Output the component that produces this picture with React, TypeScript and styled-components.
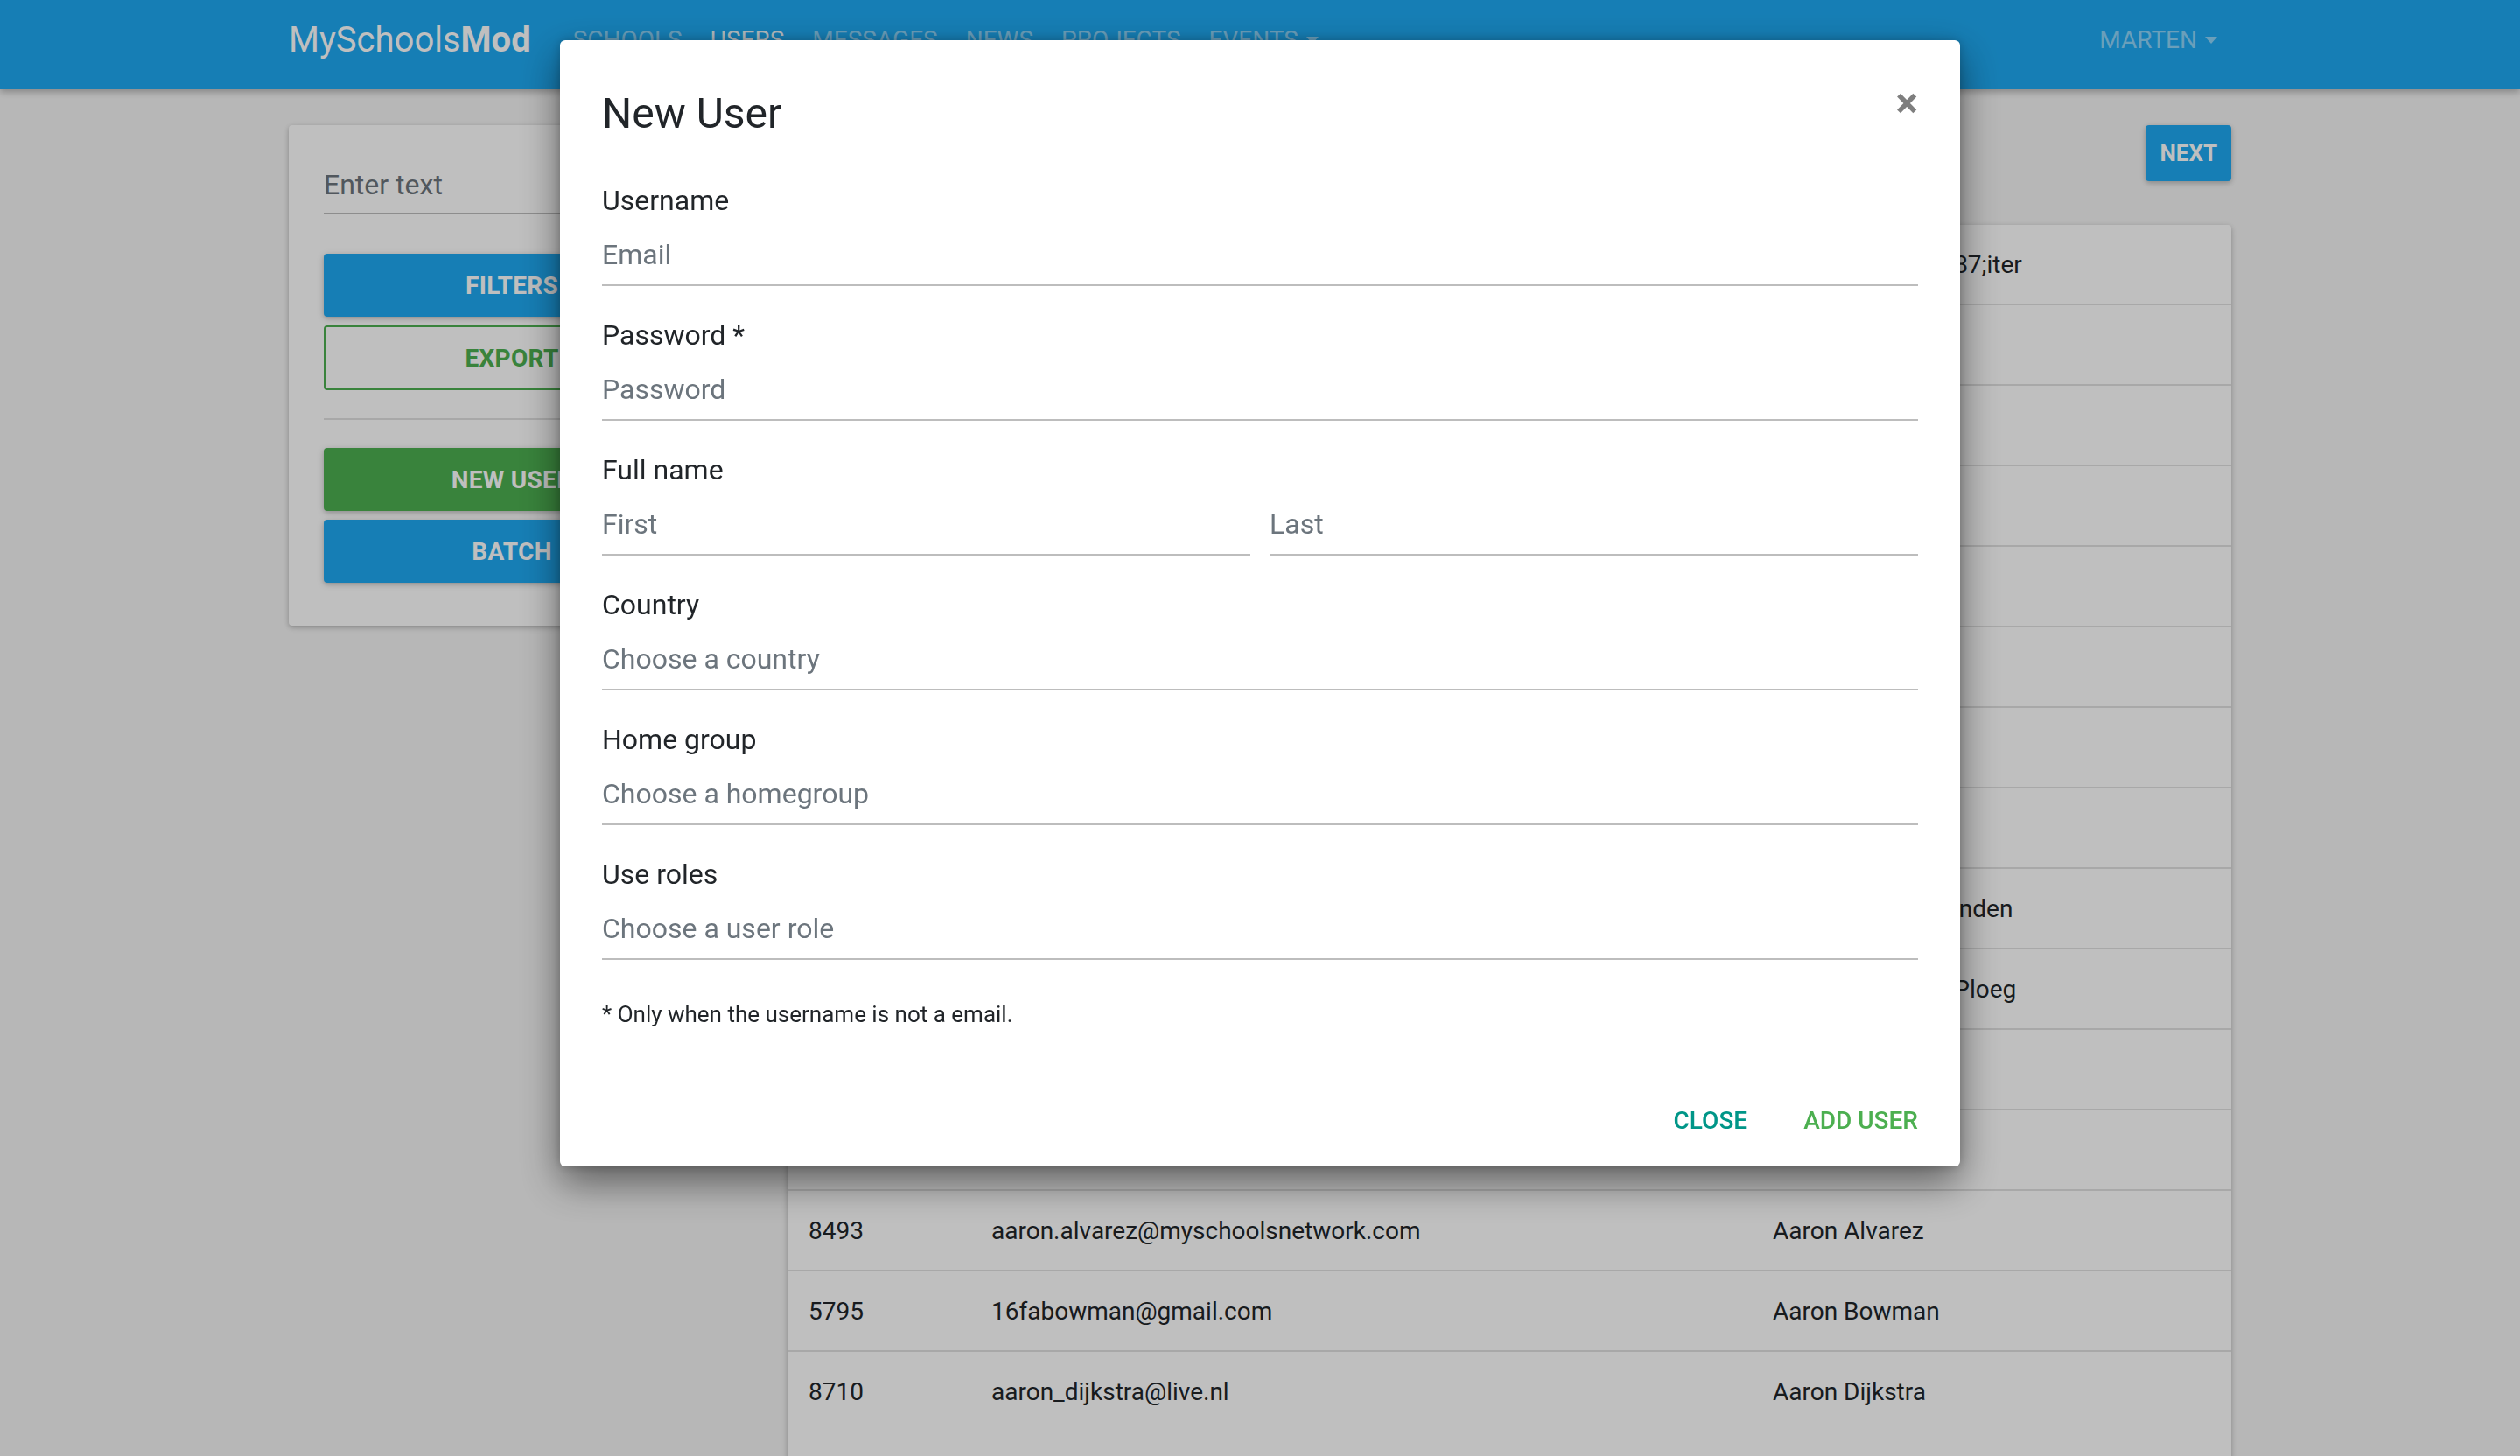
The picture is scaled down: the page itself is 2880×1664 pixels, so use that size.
import React from "react";
import styled, { createGlobalStyle } from "styled-components";

const GlobalStyle = createGlobalStyle`
  * { box-sizing: border-box; }
  html, body { margin: 0; padding: 0; height: 100%; overflow: hidden; }
  body {
    font-family: Roboto, "Noto Sans", "Liberation Sans", sans-serif;
    background: #f5f5f5;
    color: #212529;
  }
`;

const PRIMARY = "#1ea9f2";

const Page = styled.div`
  min-height: 100vh;
  background: #f5f5f5;
`;

const NavBar = styled.header`
  height: 102px;
  background: ${PRIMARY};
  box-shadow: 0 3px 8px rgba(0, 0, 0, 0.28);
  position: relative;
  z-index: 1;
`;

const NavInner = styled.nav`
  width: 2220px;
  margin: 0 auto;
  height: 91px;
  display: flex;
  align-items: center;
`;

const Brand = styled.a`
  font-size: 40px;
  color: #fff;
  margin-right: 32px;
  line-height: 1;
  text-decoration: none;
  b { font-weight: 700; }
`;

const NavLink = styled.a<{ $active?: boolean; $right?: boolean }>`
  font-size: 28px;
  text-transform: uppercase;
  padding: 0 16px;
  line-height: 42px;
  color: ${(p) => (p.$active ? "rgba(255,255,255,0.95)" : "rgba(255,255,255,0.5)")};
  margin-left: ${(p) => (p.$right ? "auto" : "0")};
  text-decoration: none;
  display: inline-flex;
  align-items: center;
`;

const Caret = styled.span`
  display: inline-block;
  margin-left: 9px;
  border-top: 8px solid currentColor;
  border-left: 7px solid transparent;
  border-right: 7px solid transparent;
`;

const Main = styled.main`
  width: 2220px;
  margin: 0 auto;
  padding-top: 41px;
  display: grid;
  grid-template-columns: 510px 1650px;
  gap: 60px;
  align-items: start;
`;

const Card = styled.section`
  background: #fff;
  border-radius: 4px;
  box-shadow: 0 2px 5px rgba(0, 0, 0, 0.16), 0 2px 10px rgba(0, 0, 0, 0.12);
`;

const SidePanel = styled(Card)`
  padding: 40px 40px 49px;
  display: flex;
  flex-direction: column;
`;

const SearchInput = styled.input`
  height: 62px;
  border: none;
  border-bottom: 2px solid #bdbdbd;
  padding: 0 0 4px;
  font-family: inherit;
  font-size: 32px;
  background: transparent;
  color: #212529;
  outline: none;
  margin-bottom: 45px;
  &::placeholder { color: #6c757d; }
`;

const variantBg: Record<string, string> = {
  blue: PRIMARY,
  green: "#4caf50",
  outline: "transparent",
};

const PanelButton = styled.button<{ $variant: "blue" | "green" | "outline" }>`
  height: ${(p) => (p.$variant === "outline" ? "74px" : "72px")};
  width: 100%;
  border-radius: 4px;
  font-family: inherit;
  font-size: 28px;
  font-weight: 700;
  text-transform: uppercase;
  letter-spacing: 0.3px;
  background: ${(p) => variantBg[p.$variant]};
  color: ${(p) => (p.$variant === "outline" ? "#4caf50" : "#fff")};
  border: ${(p) => (p.$variant === "outline" ? "2px solid #4caf50" : "none")};
  box-shadow: ${(p) =>
    p.$variant === "outline" ? "none" : "0 2px 5px rgba(0,0,0,0.16), 0 2px 10px rgba(0,0,0,0.12)"};
  & + & { margin-top: 10px; }
`;

const Divider = styled.hr`
  border: none;
  border-top: 2px solid #e0e0e0;
  margin: 32px 0;
  width: 100%;
`;

const RightCol = styled.div`
  display: flex;
  flex-direction: column;
`;

const TopBar = styled.div`
  display: flex;
  justify-content: flex-end;
`;

const NextButton = styled.button`
  height: 64px;
  padding: 0 16px;
  border: none;
  border-radius: 4px;
  background: ${PRIMARY};
  color: #fff;
  font-family: inherit;
  font-size: 26px;
  font-weight: 700;
  box-shadow: 0 2px 5px rgba(0, 0, 0, 0.16), 0 2px 10px rgba(0, 0, 0, 0.12);
`;

const TableCard = styled(Card)`
  margin-top: 50px;
  padding-bottom: 300px;
`;

const Row = styled.div`
  display: grid;
  grid-template-columns: 209px 893px 1fr;
  border-bottom: 2px solid #e0e0e0;
  &:last-child { border-bottom: none; }
`;

const Cell = styled.div`
  padding: 25px 24px 23px;
  font-size: 28px;
  line-height: 42px;
  color: #212529;
  white-space: nowrap;
`;

const Backdrop = styled.div`
  position: fixed;
  inset: 0;
  background: rgba(0, 0, 0, 0.25);
  z-index: 10;
`;

const Modal = styled.div`
  position: fixed;
  top: 46px;
  left: 50%;
  transform: translateX(-50%);
  width: 1600px;
  background: #fff;
  border-radius: 6px;
  box-shadow: 0 18px 45px rgba(0, 0, 0, 0.5), 0 0 12px rgba(0, 0, 0, 0.2);
  z-index: 20;
`;

const ModalHeader = styled.div`
  display: flex;
  justify-content: space-between;
  align-items: flex-start;
  padding: 55px 48px 0;
`;

const ModalTitle = styled.h2`
  margin: 0;
  font-size: 48px;
  font-weight: 400;
  line-height: 1.2;
  color: #212529;
`;

const CloseX = styled.button`
  border: none;
  background: none;
  padding: 0;
  margin-top: -7px;
  margin-right: 0;
  font-family: inherit;
  font-size: 48px;
  font-weight: 700;
  line-height: 1;
  color: #000;
  opacity: 0.5;
`;

const ModalBody = styled.div`
  padding: 46px 48px 0;
  display: flex;
  flex-direction: column;
  gap: 32px;
`;

const Field = styled.div`
  display: flex;
  flex-direction: column;
`;

const Label = styled.label`
  font-size: 32px;
  line-height: 48px;
  color: #212529;
  margin-bottom: 14px;
`;

const Pair = styled.div`
  display: grid;
  grid-template-columns: 1fr 1fr;
  gap: 22px;
`;

const TextInput = styled.input`
  width: 100%;
  height: 60px;
  border: none;
  border-bottom: 2px solid #bdbdbd;
  padding: 0 0 10px;
  font-family: inherit;
  font-size: 32px;
  color: #212529;
  background: transparent;
  outline: none;
  &::placeholder { color: #6c757d; }
`;

const Note = styled.p`
  margin: 10px 0 0;
  font-size: 26px;
  line-height: 40px;
  color: #212529;
`;

const ModalFooter = styled.div`
  display: flex;
  justify-content: flex-end;
  gap: 64px;
  padding: 81px 48px 31px;
`;

const TextButton = styled.button<{ $color: string }>`
  border: none;
  background: none;
  padding: 0;
  font-family: inherit;
  font-size: 28px;
  line-height: 42px;
  font-weight: 500;
  text-transform: uppercase;
  color: ${(p) => p.$color};
`;

const rows: [string, string, string][] = [
  ["9021", "a.wouters@myschoolsnetwork.com", "Anske van de &#87;iter"],
  ["7764", "a.bakker@gmail.com", "A. Bakker"],
  ["6610", "aafje.jansen@live.nl", "Aafje Jansen"],
  ["4521", "a.devries@hotmail.com", "Aagje de Vries"],
  ["3390", "aalt.smit@myschoolsnetwork.com", "Aalt Smit"],
  ["8102", "aaltje.mulder@gmail.com", "Aaltje Mulder"],
  ["2287", "aart.bos@live.nl", "Aart Bos"],
  ["5043", "aart.vandam@myschoolsnetwork.com", "Aart van Dam"],
  ["6931", "aagtje.linden@gmail.com", "Aagtje van den Linden"],
  ["1178", "adriaan.ploeg@myschoolsnetwork.com", "Adriaan van den Ploeg"],
  ["7455", "aaron.adams@gmail.com", "Aaron Adams"],
  ["3062", "aaron.ahmed@live.nl", "Aaron Ahmed"],
  ["8493", "aaron.alvarez@myschoolsnetwork.com", "Aaron Alvarez"],
  ["5795", "16fabowman@gmail.com", "Aaron Bowman"],
  ["8710", "aaron_dijkstra@live.nl", "Aaron Dijkstra"],
];

export default function App() {
  return (
    <>
      <GlobalStyle />
      <Page>
        <NavBar>
          <NavInner>
            <Brand>
              MySchools<b>Mod</b>
            </Brand>
            <NavLink>Schools</NavLink>
            <NavLink $active>Users</NavLink>
            <NavLink>Messages</NavLink>
            <NavLink>News</NavLink>
            <NavLink>Projects</NavLink>
            <NavLink>
              Events
              <Caret />
            </NavLink>
            <NavLink $right>
              Marten
              <Caret />
            </NavLink>
          </NavInner>
        </NavBar>
        <Main>
          <SidePanel>
            <SearchInput placeholder="Enter text" />
            <PanelButton $variant="blue">Filters</PanelButton>
            <PanelButton $variant="outline">Export</PanelButton>
            <Divider />
            <PanelButton $variant="green">New user</PanelButton>
            <PanelButton $variant="blue">Batch</PanelButton>
          </SidePanel>
          <RightCol>
            <TopBar>
              <NextButton>NEXT</NextButton>
            </TopBar>
            <TableCard>
              {rows.map(([id, email, name]) => (
                <Row key={id}>
                  <Cell>{id}</Cell>
                  <Cell>{email}</Cell>
                  <Cell>{name}</Cell>
                </Row>
              ))}
            </TableCard>
          </RightCol>
        </Main>
      </Page>
      <Backdrop />
      <Modal role="dialog">
        <ModalHeader>
          <ModalTitle>New User</ModalTitle>
          <CloseX aria-label="Close">×</CloseX>
        </ModalHeader>
        <ModalBody>
          <Field>
            <Label>Username</Label>
            <TextInput placeholder="Email" />
          </Field>
          <Field>
            <Label>Password *</Label>
            <TextInput placeholder="Password" type="password" />
          </Field>
          <Field>
            <Label>Full name</Label>
            <Pair>
              <TextInput placeholder="First" />
              <TextInput placeholder="Last" />
            </Pair>
          </Field>
          <Field>
            <Label>Country</Label>
            <TextInput placeholder="Choose a country" />
          </Field>
          <Field>
            <Label>Home group</Label>
            <TextInput placeholder="Choose a homegroup" />
          </Field>
          <Field>
            <Label>Use roles</Label>
            <TextInput placeholder="Choose a user role" />
          </Field>
          <Note>* Only when the username is not a email.</Note>
        </ModalBody>
        <ModalFooter>
          <TextButton $color="#009688">Close</TextButton>
          <TextButton $color="#4caf50">Add user</TextButton>
        </ModalFooter>
      </Modal>
    </>
  );
}
